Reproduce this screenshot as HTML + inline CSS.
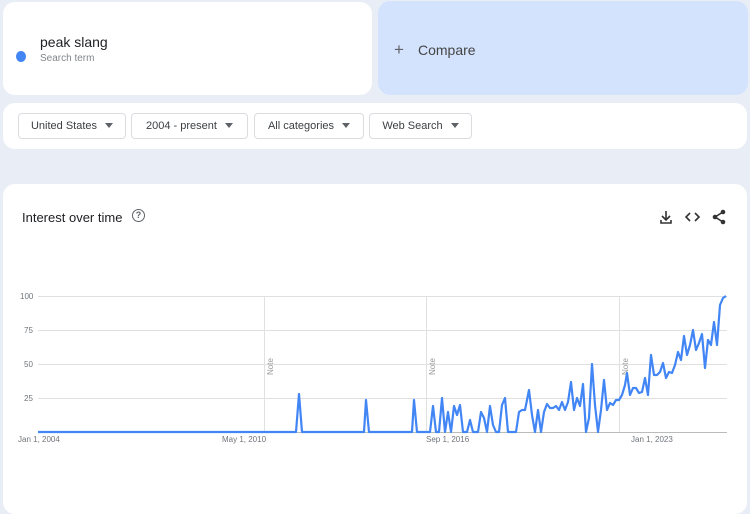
<!DOCTYPE html>
<html><head><meta charset="utf-8"><style>
body{margin:0;width:750px;height:500px;background:#e9eef6;font-family:"Liberation Sans",sans-serif;position:relative;overflow:hidden}
.card{position:absolute;background:#fff;border-radius:12px}
.btn{position:absolute;top:113px;height:24px;border:1px solid #dadce0;border-radius:4px;background:#fff;font-size:11px;color:#3c4043;line-height:24px;text-align:center}
.tri{display:inline-block;width:0;height:0;border-left:4px solid transparent;border-right:4px solid transparent;border-top:5px solid #5f6368;margin-left:8px;vertical-align:1px}
.lab{position:absolute;font-size:8px;color:#70757a}
</style></head><body>
<div class="card" style="left:3px;top:2px;width:369px;height:93px"></div>
<div style="position:absolute;left:16px;top:51px;width:10px;height:11px;border-radius:50%;background:#4285f4"></div>
<div style="position:absolute;left:40px;top:34px;font-size:14px;color:#202124">peak slang</div>
<div style="position:absolute;left:40px;top:53px;font-size:10px;color:#80868b">Search term</div>
<div style="position:absolute;left:378px;top:1px;width:370px;height:94px;background:#d3e3fd;border-radius:12px"></div>
<div style="position:absolute;left:394px;top:40px;font-size:17px;color:#5f6368">+</div>
<div style="position:absolute;left:418px;top:42px;font-size:14px;color:#444">Compare</div>
<div class="card" style="left:3px;top:103px;width:744px;height:46px"></div>
<div class="btn" style="left:18px;width:106px">United States<span class="tri"></span></div>
<div class="btn" style="left:131px;width:115px">2004 - present<span class="tri"></span></div>
<div class="btn" style="left:254px;width:108px">All categories<span class="tri"></span></div>
<div class="btn" style="left:369px;width:101px">Web Search<span class="tri"></span></div>
<div class="card" style="left:3px;top:184px;width:744px;height:330px"></div>
<div style="position:absolute;left:22px;top:210px;font-size:13px;color:#202124;white-space:nowrap">Interest over time</div>
<div style="position:absolute;left:132px;top:209px;width:11px;height:11px;border:1.5px solid #5f6368;border-radius:50%;font-size:9px;line-height:11px;text-align:center;color:#5f6368;font-weight:bold">?</div>
<svg style="position:absolute;left:0;top:0" width="750" height="500">
<g fill="none" stroke="#333" stroke-width="1.6">
<path d="M666 211v9M662 216l4 4 4-4M661 220v3h10v-3"/>
<path d="M690 213l-4 4 4 4M695 213l4 4-4 4"/>
<path d="M723 212l-8 5 8 5"/>
</g>
<g fill="#333"><circle cx="723" cy="212" r="2.3"/><circle cx="715" cy="217" r="2.3"/><circle cx="723" cy="222" r="2.3"/></g>
<g stroke="#e0e0e0" stroke-width="1">
<line x1="38" y1="296.5" x2="727" y2="296.5"/><line x1="38" y1="330.5" x2="727" y2="330.5"/><line x1="38" y1="364.5" x2="727" y2="364.5"/><line x1="38" y1="398.5" x2="727" y2="398.5"/>
<line x1="264.5" y1="296" x2="264.5" y2="432"/><line x1="426.5" y1="296" x2="426.5" y2="432"/><line x1="619.5" y1="296" x2="619.5" y2="432"/>
</g>
<line x1="38" y1="432.5" x2="727" y2="432.5" stroke="#bbb"/>
<g font-size="8" fill="#999" font-family="Liberation Sans"><text transform="translate(273,375) rotate(-90)">Note</text><text transform="translate(435,375) rotate(-90)">Note</text><text transform="translate(628,375) rotate(-90)">Note</text></g>
<polyline fill="none" stroke="#4285f4" stroke-width="2.2" stroke-linejoin="round" points="38,432 296,432 299,394 302,432 364,432 366,400 369,432 412,432 414,400 417,432 430,432 433,406 436,432 439,432 442,398 445,432 448,412 451,432 454,406 457,415 460,405 463,432 467,432 470,420 473,432 478,432 481,412 484,418 487,432 490,406 493,425 496,432 499,432 502,405 505,398 508,432 516,432 519,412 522,410 525,410 529,390 532,415 535,432 538,410 541,432 544,412 547,404 550,408 553,408 556,406 559,410 562,402 565,410 568,402 571,382 574,410 577,398 580,406 583,384 586,432 589,418 592,364 595,405 598,432 601,410 604,380 607,410 610,403 613,405 616,400 619,400 622,395 625,385 627,373 630,395 633,388 636,388 639,393 642,392 645,378 648,395 651,355 654,375 657,375 660,372 663,363 666,378 669,372 672,373 675,365 678,352 681,360 684,336 687,355 690,345 693,330 696,350 699,343 702,334 705,368 708,340 711,345 714,322 717,345 720,305 723,298 726,296"/>
</svg>
<div class="lab" style="left:20px;top:292px">100</div>
<div class="lab" style="left:24px;top:326px">75</div>
<div class="lab" style="left:24px;top:360px">50</div>
<div class="lab" style="left:24px;top:394px">25</div>
<div class="lab" style="left:18px;top:435px">Jan 1, 2004</div>
<div class="lab" style="left:222px;top:435px">May 1, 2010</div>
<div class="lab" style="left:426px;top:435px">Sep 1, 2016</div>
<div class="lab" style="left:631px;top:435px">Jan 1, 2023</div>
</body></html>
